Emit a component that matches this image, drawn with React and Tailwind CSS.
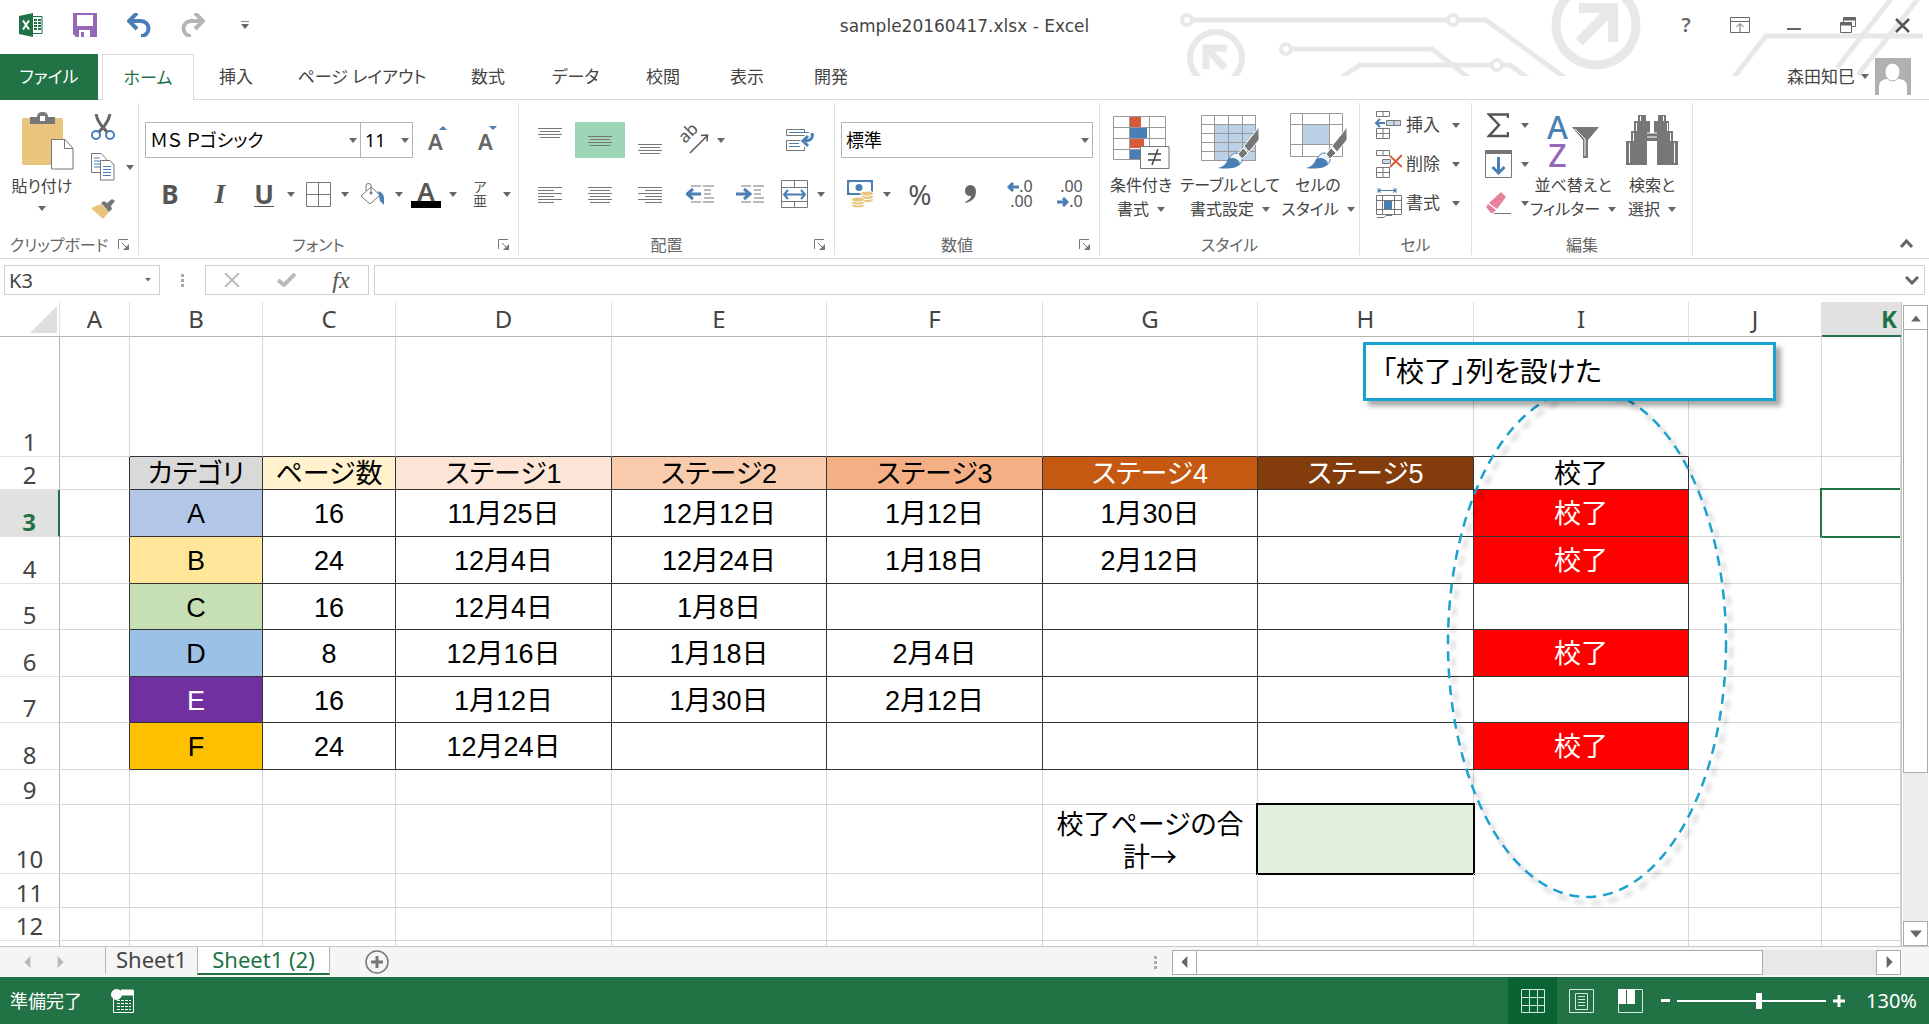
import { clsx } from "clsx";

const TABS = [
  { label: "挿入" },
  { label: "ページ レイアウト", width: "w-[168px]" },
  { label: "数式" },
  { label: "データ", width: "w-[91px]" },
  { label: "校閲" },
  { label: "表示" },
  { label: "開発" },
];

const COLUMNS = [
  { name: "A", width: "w-[70px]" },
  { name: "B", width: "w-[133px]" },
  { name: "C", width: "w-[133px]" },
  { name: "D", width: "w-[216px]" },
  { name: "E", width: "w-[215px]" },
  { name: "F", width: "w-[216px]" },
  { name: "G", width: "w-[215px]" },
  { name: "H", width: "w-[216px]" },
  { name: "I", width: "w-[215px]" },
  { name: "J", width: "w-[133px]" },
  { name: "K", width: "" },
];

const DONE = "校了";

const ROWS = [
  { n: 1, height: "h-[120px]", cells: {} },
  {
    n: 2,
    height: "h-[33px]",
    cells: {
      B: "カテゴリ",
      C: "ページ数",
      D: "ステージ1",
      E: "ステージ2",
      F: "ステージ3",
      G: "ステージ4",
      H: "ステージ5",
      I: DONE,
    },
  },
  { n: 3, height: "h-[47px]", cells: { B: "A", C: "16", D: "11月25日", E: "12月12日", F: "1月12日", G: "1月30日", I: DONE } },
  { n: 4, height: "h-[47px]", cells: { B: "B", C: "24", D: "12月4日", E: "12月24日", F: "1月18日", G: "2月12日", I: DONE } },
  { n: 5, height: "h-[46px]", cells: { B: "C", C: "16", D: "12月4日", E: "1月8日" } },
  { n: 6, height: "h-[47px]", cells: { B: "D", C: "8", D: "12月16日", E: "1月18日", F: "2月4日", I: DONE } },
  { n: 7, height: "h-[46px]", cells: { B: "E", C: "16", D: "1月12日", E: "1月30日", F: "2月12日" } },
  { n: 8, height: "h-[47px]", cells: { B: "F", C: "24", D: "12月24日", I: DONE } },
  { n: 9, height: "h-[35px]", cells: {} },
  { n: 10, height: "h-[69px]", cells: { G: "校了ページの合計→" } },
  { n: 11, height: "h-[34px]", cells: {} },
  { n: 12, height: "h-[33px]", cells: {} },
  { n: "", height: "h-[33px]", cells: {} },
];

const FILLS = {
  B2: "bg-[#d9d9d9]",
  C2: "bg-[#fff2cc]",
  D2: "bg-[#fce4d6]",
  E2: "bg-[#f8cbad]",
  F2: "bg-[#f4b084]",
  G2: "bg-[#c65911] text-white",
  H2: "bg-[#833c0c] text-white",
  B3: "bg-[#b4c6e7]",
  B4: "bg-[#ffe699]",
  B5: "bg-[#c6e0b4]",
  B6: "bg-[#9bc2e6]",
  B7: "bg-[#7030a0] text-white",
  B8: "bg-[#ffc000]",
  H10: "bg-[#e2efda]",
};

function Caret({ className = "" }) {
  return (
    <svg viewBox="0 0 8 5" className={clsx("h-[5px] w-2 shrink-0", className)} fill="#666">
      <path d="M0 0h8L4 5z" />
    </svg>
  );
}

function Split({ label, children }) {
  return (
    <div className="flex h-9 w-[54px] items-center">
      <button type="button" aria-label={label} className="flex h-9 w-[38px] items-center justify-center">
        {children}
      </button>
      <button type="button" aria-label={`${label} オプション`} className="flex h-9 w-4 items-center justify-center">
        <Caret />
      </button>
    </div>
  );
}

function Tool({ label, active, children }) {
  return (
    <button
      type="button"
      aria-label={label}
      className={clsx("flex h-9 w-[50px] items-center justify-center", active && "bg-[#9fd5b7]")}
    >
      {children}
    </button>
  );
}

function Group({ label, width, launcher, children }) {
  return (
    <section className={clsx("my-[3px] flex shrink-0 flex-col border-r border-[#e1e1e1]", width)}>
      <div className="h-[132px]">{children}</div>
      <div className="flex h-5 items-center text-[#666]">
        <span className="flex-1 whitespace-nowrap text-center leading-5">{label}</span>
        {launcher && (
          <button type="button" aria-label={`${label}の設定`} className="mr-2 w-3">
            <svg viewBox="0 0 12 12" className="h-3 w-3" fill="none" stroke="#777">
              <path d="M.5 10V.5H10M4 4l6 6" />
              <path d="M11 5v6H5z" fill="#777" stroke="none" />
            </svg>
          </button>
        )}
      </div>
    </section>
  );
}

function BigButton({ lines, width, icon }) {
  return (
    <button type="button" className={clsx("flex h-[124px] shrink-0 flex-col items-center", width)}>
      <span className="flex h-[62px] items-end justify-center">{icon}</span>
      <span className="mt-1 whitespace-nowrap leading-6">{lines[0]}</span>
      <span className="flex items-center gap-2 whitespace-nowrap leading-6">
        {lines[1]}
        <Caret />
      </span>
    </button>
  );
}

/* rows holds the start and end x of each ruled line */
function LinesIcon({ rows }) {
  const height = 3 * (rows.length - 1) + 2;
  return (
    <svg viewBox={`0 0 24 ${height}`} width="24" height={height} stroke="#777" shapeRendering="crispEdges">
      {rows.map(([a, b], i) => (
        <path key={i} d={`M${a} ${i * 3 + 1}H${b}`} />
      ))}
    </svg>
  );
}

const VALIGN_ROWS = [[0, 24], [2, 22], [0, 24], [2, 22]];
const LEFT_ROWS = [[0, 24], [0, 16], [0, 24], [0, 16], [0, 24], [0, 16]];
const CENTER_ROWS = [[0, 24], [2, 22], [0, 24], [2, 22], [0, 24], [2, 22]];
const RIGHT_ROWS = [[0, 24], [7, 24], [0, 24], [7, 24], [0, 24], [7, 24]];

function ExcelIcon() {
  return (
    <svg viewBox="0 0 24 24" className="h-6 w-6">
      <path d="M13 3.500h10v17H13z" fill="#fff" stroke="#217346" />
      <path
        d="M15 6h3v2h-3zM19 6h3v2h-3zM15 9h3v2h-3zM19 9h3v2h-3zM15 12h3v2h-3zM19 12h3v2h-3zM15 15h3v2h-3zM19 15h3v2h-3z"
        fill="#217346"
      />
      <path d="M0 3l14-3v24L0 21z" fill="#217346" />
      <path d="M4 7.500l6 9M10 7.500l-6 9" stroke="#fff" strokeWidth="2" />
    </svg>
  );
}

function SaveIcon() {
  return (
    <svg viewBox="0 0 24 24" className="h-6 w-6">
      <path d="M0 0h24v24H3l-3-3z" fill="#9668b8" />
      <path d="M4 2h16v11H4zM6 17h11v7H6z" fill="#fff" />
      <path d="M8 19h3v5H8z" fill="#9668b8" />
    </svg>
  );
}

function UndoIcon({ color, flip }) {
  return (
    <svg viewBox="0 0 24 24" className={clsx("h-6 w-6", flip && "-scale-x-100")} fill="none" stroke={color}>
      <path d="M3 8h11a7.500 7.500 0 0 1 0 15" strokeWidth="4" />
      <path d="M10 0L2 8l8 8" strokeWidth="4" />
    </svg>
  );
}

function PasteIcon() {
  return (
    <svg viewBox="0 0 52 58" className="h-[58px] w-[52px]">
      <rect y="6" width="41" height="47" rx="2" fill="#e9c47c" />
      <path d="M8 12V5h7q0-5 5.500-5T26 5h7v7z" fill="#777" />
      <rect x="18" y="4" width="5" height="5" fill="#fff" />
      <path d="M29.500 27.500H43l8 9V57H29.500z" fill="#fff" stroke="#777" />
      <path d="M42.500 28v8.500H51" fill="none" stroke="#777" />
    </svg>
  );
}

function CutIcon() {
  return (
    <svg viewBox="0 0 24 26" className="h-[26px] w-6" fill="none">
      <path d="M5 0q1 6 5 11l6 7M19 0q-1 6-5 11l-6 7" stroke="#666" strokeWidth="3" />
      <circle cx="5" cy="21" r="4" stroke="#4a7fb5" strokeWidth="2" />
      <circle cx="19" cy="21" r="4" stroke="#4a7fb5" strokeWidth="2" />
    </svg>
  );
}

function CopyIcon() {
  return (
    <svg viewBox="0 0 24 28" className="h-7 w-6">
      <path d="M.5.5H10l5 5v14H.5z" fill="#fff" stroke="#777" />
      <path d="M3 5h6M3 8h6M3 11h6M3 14h6" stroke="#4a7fb5" />
      <path d="M9.500 7.500H19l4 4.500v15H9.500z" fill="#fff" stroke="#777" />
      <path d="M12 13.500h8M12 16.500h8M12 19.500h8M12 22.500h8" stroke="#4a7fb5" />
    </svg>
  );
}

function BrushIcon() {
  return (
    <svg viewBox="0 0 24 20" className="h-5 w-6">
      <path d="M0 9l10-4 8 8-6 7z" fill="#e9c47c" />
      <path d="M10 4l3-2 3 2 5-4 3 2-4 5 1 3-3 3z" fill="#777" />
    </svg>
  );
}

function BordersIcon() {
  return (
    <svg viewBox="0 0 25 25" className="h-[25px] w-[25px]" fill="none" stroke="#777">
      <path d="M.5.5h24v24H.5zM12.500 0v25M0 12.500h25" />
    </svg>
  );
}

function BucketIcon() {
  return (
    <svg viewBox="0 0 24 22" className="h-[22px] w-6" fill="none">
      <path d="M11 4l9 8-10 9-9-8z" stroke="#777" />
      <path d="M6 8V3q0-3 3-2.500t2 3V11" stroke="#777" />
      <circle cx="11" cy="10" r="1.500" fill="#777" />
      <path d="M18 8q6 2 6 7v7l-4-4z" fill="#4a7fb5" />
    </svg>
  );
}

function FontSizeIcon({ grow }) {
  return (
    <svg viewBox="0 0 24 32" className="h-8 w-6" fill="#666">
      <text x="2" y="26" fontSize="22" fontWeight="600">
        A
      </text>
      <path d={grow ? "M13 6h8l-4-4z" : "M13 2h8l-4 4z"} fill="#4a7fb5" />
    </svg>
  );
}

function OrientationIcon() {
  return (
    <svg viewBox="0 0 32 32" className="h-8 w-8" fill="none" stroke="#555">
      <text x="7" y="20" transform="rotate(-45 7 20)" fontSize="17" fill="#555" stroke="none">
        ab
      </text>
      <path d="M12 29L29 12M23 11.500l6.500-.5-.5 6.500" strokeWidth="1.500" />
    </svg>
  );
}

function WrapIcon() {
  return (
    <svg viewBox="0 0 28 24" className="h-6 w-7" fill="none">
      <path d="M18.500 4V1.500H.5v6h18M18.500 19v3.500H.5v-10h14" stroke="#777" />
      <path d="M3 4.500h20M3 15.500h10M3 18.500h11" stroke="#4a7fb5" />
      <path d="M26 5q2 8-8 8M22 8l-5 5 5 5" stroke="#4a7fb5" strokeWidth="3" />
    </svg>
  );
}

function IndentIcon({ flip }) {
  return (
    <svg viewBox="0 0 28 18" className="h-[18px] w-7" fill="none">
      <path d="M5 1h10M17 1h11M18 5h7M18 9h7M18 13h10M5 17h10M17 17h11" stroke="#777" />
      <path
        d={flip ? "M0 9h13M8 4l6 5-6 5" : "M2 9h13M7 4L1 9l6 5"}
        stroke="#4a7fb5"
        strokeWidth="3"
      />
    </svg>
  );
}

function MergeIcon() {
  return (
    <svg viewBox="0 0 27 28" className="h-7 w-[27px]" fill="none">
      <path d="M.5.5h26v27H.5zM0 7.500h27M0 21.500h27M13.500 0v7M13.500 22v6" stroke="#777" />
      <path d="M3 14.500h21M7 10l-4 4.500L7 19M20 10l4 4.500-4 4.500" stroke="#4a7fb5" strokeWidth="2" />
    </svg>
  );
}

function MoneyIcon() {
  return (
    <svg viewBox="0 0 27 28" className="h-7 w-[27px]">
      <rect x="1" y="1" width="24" height="13" fill="#fff" stroke="#4a7fb5" strokeWidth="2" />
      <path d="M0 0h5L0 5zM26 0h-5l5 5zM0 15v-5l5 5z" fill="#4a7fb5" />
      <circle cx="12" cy="7.500" r="3.500" fill="#4a7fb5" />
      <g fill="#e9c47c" stroke="#fff">
        <ellipse cx="20" cy="20" rx="6.500" ry="2.500" />
        <ellipse cx="20" cy="17" rx="6.500" ry="2.500" />
        <ellipse cx="20" cy="13.500" rx="6.500" ry="2.500" />
        <ellipse cx="11" cy="25.500" rx="6.500" ry="2.500" />
        <ellipse cx="11" cy="22.500" rx="6.500" ry="2.500" />
        <ellipse cx="11" cy="19.500" rx="6.500" ry="2.500" />
      </g>
    </svg>
  );
}

function DecimalArrow({ dir }) {
  return (
    <svg viewBox="0 0 12 10" className="h-[10px] w-3" fill="none" stroke="#4a7fb5" strokeWidth="3">
      <path d={dir === "left" ? "M12 5H2M6 1L2 5l4 4" : "M0 5h10M6 1l4 4-4 4"} />
    </svg>
  );
}

function DecimalIcon({ increase }) {
  return (
    <span className="flex flex-col text-base leading-[15px] text-[#555]">
      <span className="flex items-center justify-end">
        {increase && <DecimalArrow dir="left" />}
        {increase ? ".0" : ".00"}
      </span>
      <span className="flex items-center justify-end">
        {!increase && <DecimalArrow dir="right" />}
        {increase ? ".00" : ".0"}
      </span>
    </span>
  );
}

function ConditionalIcon() {
  return (
    <svg viewBox="0 0 57 53" className="h-[53px] w-[57px]">
      <path d="M17 1h11v10H17zM17 23h14v9H17z" fill="#d65a3c" />
      <path d="M17 12h17v10H17zM17 34h11v9H17z" fill="#4a7fb5" />
      <path d="M.5.5h52v43H.5zM0 11.500h52M0 22.500h52M0 33.500h52M16.500 0v43M36.500 0v43" fill="none" stroke="#999" />
      <path d="M27.500 30.500H56v22H27.500z" fill="#fff" stroke="#777" />
      <path d="M35 38h13M35 44h13M45 33l-6 16" stroke="#444" strokeWidth="1.500" />
    </svg>
  );
}

function PaintBrush({ x, y }) {
  return (
    <g transform={`translate(${x} ${y})`}>
      <path d="M12 30q4-6 10-3 5 6-1 11-6 3-11-2z" fill="#eef4fb" stroke="#4a7fb5" />
      <path d="M0 41q8-2 10-9 8-3 12 4-3 5-8 5-8 1-14 0z" fill="#4a7fb5" />
      <path d="M20 27l5-6 5 5-6 6z" fill="#777" stroke="#fff" />
      <path d="M26 19L41 0v13L31 25z" fill="#777" stroke="#fff" />
    </g>
  );
}

function TableStyleIcon() {
  return (
    <svg viewBox="0 0 58 54" className="h-[54px] w-[58px]">
      <path d="M14 9h41v36H14z" fill="#bcd0e6" />
      <path
        d="M.5.5h54v45H.5zM0 9.500h54M0 18.500h54M0 27.500h54M0 36.500h54M13.500 0v45M27.500 0v45M41.500 0v45"
        fill="none"
        stroke="#999"
      />
      <PaintBrush x={17} y={12} />
    </svg>
  );
}

function CellStyleIcon() {
  return (
    <svg viewBox="0 0 57 56" className="h-14 w-[57px]">
      <path d="M13 12h26v19H13z" fill="#bcd0e6" />
      <path d="M.5.5h52v43H.5zM0 11.500h52M0 31.500h52M12.500 0v44M39.500 0v44" fill="none" stroke="#999" />
      <PaintBrush x={16} y={14} />
    </svg>
  );
}

function InsertCellsIcon() {
  return (
    <svg viewBox="0 0 28 28" className="h-7 w-7" fill="none" stroke="#777">
      <path d="M2.500.5h13v5h-13zM9 .5v5M2.500 17.500h13v10h-13zM9 17.500v10M2.500 22.500h13" />
      <path d="M12.500 9.500h14v5h-14zM20 9.500v5" fill="#c9d7e8" />
      <path d="M11 12H2M6 8l-4 4 4 4" stroke="#4a7fb5" strokeWidth="2" />
    </svg>
  );
}

function DeleteCellsIcon() {
  return (
    <svg viewBox="0 0 28 28" className="h-7 w-7" fill="none" stroke="#777">
      <path d="M2.500.5h13v5h-13zM9 .5v5M2.500 17.500h13v10h-13zM9 17.500v10M2.500 22.500h13" />
      <path d="M8.500 9.500h8v4h-8z" fill="#c9d7e8" />
      <path d="M16 6l12 11M28 5L16 17" stroke="#d65a3c" strokeWidth="2" />
    </svg>
  );
}

function FormatCellsIcon() {
  return (
    <svg viewBox="0 0 28 30" className="h-[30px] w-7" fill="none" stroke="#777">
      <path d="M4 2.500h18M4 0v5M22 0v5M7 .5l-3 2 3 2M19 .5l3 2-3 2" stroke="#4a7fb5" />
      <path d="M2.500 7.500h25v19h-25zM8.500 7v20M20.500 7v20M2 12.500h25M2 21.500h25M3 29.500h7l2-2h6" />
      <path d="M10 13h8v8h-8z" fill="#4a7fb5" stroke="none" />
    </svg>
  );
}

function SortFilterIcon() {
  return (
    <span className="flex h-14 items-start gap-1">
      <span className="flex w-5 flex-col items-center text-[32px] font-medium leading-[28px]">
        <span className="text-[#4a7fb5]">A</span>
        <span className="text-[#9668b8]">Z</span>
      </span>
      <svg viewBox="0 0 27 31" className="mt-[14px] h-[31px] w-[27px]">
        <path d="M0 0h27L16 13v18h-5V13z" fill="#777" />
        <path d="M3 2l10 10v17" fill="none" stroke="#fff" />
      </svg>
    </span>
  );
}

function BinocularsIcon() {
  return (
    <svg viewBox="0 0 52 56" className="h-14 w-[52px]">
      <path
        d="M12 2h8v6h4v12h4V8h4V2h8v6h3v10h4v10h5v24H31V28H21v24H0V28h5V18h3V8h4z"
        fill="#777"
      />
      <path
        d="M14.500 3v5M10.500 10v8M7.500 20v8M3.500 30v20M37.500 3v5M41.500 10v8M44.500 20v8M48.500 30v20M21 20h10M21 24h10"
        stroke="#fff"
        fill="none"
      />
    </svg>
  );
}

function TitleArt() {
  return (
    <svg
      viewBox="1180 0 749 76"
      className="pointer-events-none absolute right-0 top-0 h-[76px] w-[749px]"
      fill="none"
      stroke="#e8e8e8"
      strokeWidth="5"
    >
      <circle cx="1187" cy="20" r="5" strokeWidth="4" />
      <circle cx="1453" cy="20" r="5" strokeWidth="4" />
      <path d="M1192 20h256M1458 20h28l79 58" />
      <circle cx="1286" cy="49" r="5" strokeWidth="4" />
      <path d="M1291 49h141l37 29" />
      <circle cx="1497" cy="65" r="5" strokeWidth="4" />
      <path d="M1342 77l18-12h132M1502 65h8l18 13" />
      <circle cx="1216" cy="58" r="26" strokeWidth="6" />
      <path d="M1206 69V48h21M1206 48l19 20" strokeWidth="7" />
      <circle cx="1596" cy="25" r="40" strokeWidth="9" />
      <path d="M1579 8h34v34M1613 8l-34 34" strokeWidth="10" />
      <path d="M1734 77l32-41h157M1891-1l-54 69M1918-1l-60 76" />
    </svg>
  );
}

function TitleBar() {
  const control = "flex h-8 w-[54px] items-center justify-center";
  return (
    <header className="relative grid h-[54px] grid-cols-[1fr_auto_1fr] items-center">
      <TitleArt />
      <div className="relative flex items-center gap-[30px] pb-1 pl-[19px]">
        <ExcelIcon />
        <button type="button" aria-label="上書き保存">
          <SaveIcon />
        </button>
        <button type="button" aria-label="元に戻す">
          <UndoIcon color="#4a7fb5" />
        </button>
        <button type="button" aria-label="やり直し">
          <UndoIcon color="#b5b5b5" flip />
        </button>
        <button type="button" aria-label="クイック アクセスのカスタマイズ" className="flex w-5 flex-col items-center gap-[2px]">
          <span className="h-px w-2 bg-[#888]" />
          <Caret />
        </button>
      </div>
      <h1 className="relative font-['DejaVu_Sans',sans-serif] text-[17px] text-[#444]">sample20160417.xlsx - Excel</h1>
      <div className="relative flex justify-end pb-1">
        <button type="button" aria-label="ヘルプ" className={clsx(control, "text-xl font-semibold text-[#666]")}>
          ?
        </button>
        <button type="button" aria-label="リボンの表示オプション" className={control}>
          <svg viewBox="0 0 20 16" className="h-4 w-5" fill="none" stroke="#666">
            <path d="M.5.5h19v15H.5zM0 4.500h20M10 15V7M6.500 10L10 6.500l3.500 3.500" />
          </svg>
        </button>
        <button type="button" aria-label="最小化" className={clsx(control, "pt-2")}>
          <span className="h-[2px] w-[14px] bg-[#666]" />
        </button>
        <button type="button" aria-label="元のサイズに戻す" className={control}>
          <svg viewBox="0 0 16 16" className="h-4 w-4" fill="none" stroke="#666">
            <path d="M3.500 5V.5h12v9H12M.5 5.500h11v10H.5z" />
            <path d="M3 2h13M0 7h12" strokeWidth="3" />
          </svg>
        </button>
        <button type="button" aria-label="閉じる" className={control}>
          <svg viewBox="0 0 15 15" className="h-[15px] w-[15px]" stroke="#555" strokeWidth="2.500">
            <path d="M1 1l13 13M14 1L1 14" />
          </svg>
        </button>
      </div>
    </header>
  );
}

function TabBar() {
  return (
    <nav className="relative flex h-[46px] text-[17px] text-[#444]">
      <button type="button" className="w-[98px] bg-[#217346] text-white">
        ファイル
      </button>
      <span className="w-1 border-b border-[#d9d9d9]" />
      <button type="button" className="w-[92px] border border-b-0 border-[#d9d9d9] bg-white text-[#217346]">
        ホーム
      </button>
      {TABS.map((tab) => (
        <button key={tab.label} type="button" className={clsx("whitespace-nowrap border-b border-[#d9d9d9]", tab.width ?? "w-[84px]")}>
          {tab.label}
        </button>
      ))}
      <div className="flex flex-1 items-center justify-end border-b border-[#d9d9d9] pr-[18px]">
        <button type="button" className="flex items-center gap-[6px]">
          森田知巳
          <Caret />
        </button>
        <svg viewBox="0 0 36 37" className="ml-[6px] h-[37px] w-9">
          <path d="M0 0h36v37H0z" fill="#b0b0b0" />
          <path d="M4 37V28q0-6 8-7h12q8 1 8 7v9z" fill="#fff" />
          <ellipse cx="17.500" cy="14" rx="7.500" ry="9" fill="#fff" stroke="#b0b0b0" />
        </svg>
      </div>
    </nav>
  );
}

function CellCommand({ icon, label }) {
  return (
    <button type="button" className="flex h-9 items-center">
      {icon}
      <span className="ml-1 w-[42px] text-left text-[17px]">{label}</span>
      <Caret className="ml-1" />
    </button>
  );
}

function Ribbon() {
  const rows = "flex flex-col gap-[18px] pl-[6px] pt-[19px]";
  const select = "h-9 w-full appearance-none border border-[#b5b5b5] bg-white pl-1 text-lg text-black";
  const selectCaret = "pointer-events-none absolute right-1 top-4";

  return (
    <div className="relative flex h-[159px] border-b border-[#d9d9d9] text-base text-[#444]">
      <Group label="クリップボード" width="w-[139px]" launcher>
        <div className="flex">
          <button type="button" className="flex w-[84px] flex-col items-center">
            <span className="pl-3 pt-[9px]">
              <PasteIcon />
            </span>
            <span className="pt-1">貼り付け</span>
            <Caret className="mt-2" />
          </button>
          <div className="flex flex-col pt-[6px]">
            <div className="pl-[7px]">
              <button type="button" aria-label="切り取り" className="flex h-9 w-6 items-center">
                <CutIcon />
              </button>
            </div>
            <div className="my-1">
              <Split label="コピー">
                <CopyIcon />
              </Split>
            </div>
            <div className="pl-[7px]">
              <button type="button" aria-label="書式のコピー/貼り付け" className="flex h-10 w-6 items-center">
                <BrushIcon />
              </button>
            </div>
          </div>
        </div>
      </Group>

      <Group label="フォント" width="w-[380px]" launcher>
        <div className={rows}>
          <div className="flex h-9 items-center">
            <div className="relative w-[216px]">
              <select aria-label="フォント名" className={select}>
                <option>ＭＳ Ｐゴシック</option>
              </select>
              <Caret className={selectCaret} />
            </div>
            <div className="relative w-[52px]">
              <select aria-label="フォント サイズ" className={clsx(select, "border-l-0")}>
                <option>11</option>
              </select>
              <Caret className={selectCaret} />
            </div>
            <Tool label="フォント サイズの拡大">
              <FontSizeIcon grow />
            </Tool>
            <Tool label="フォント サイズの縮小">
              <FontSizeIcon />
            </Tool>
          </div>
          <div className="flex h-9 items-center text-[#555]">
            <Tool label="太字">
              <span className="text-[26px] font-bold">B</span>
            </Tool>
            <Tool label="斜体">
              <span className="font-['Liberation_Serif',serif] text-[28px] font-bold italic">I</span>
            </Tool>
            <Split label="下線">
              <span className="border-b border-[#555] text-[26px] font-bold leading-6">U</span>
            </Split>
            <Split label="罫線">
              <BordersIcon />
            </Split>
            <Split label="塗りつぶしの色">
              <BucketIcon />
            </Split>
            <Split label="フォントの色">
              <span className="border-b-[7px] border-black px-[6px] text-[26px] font-semibold leading-5">A</span>
            </Split>
            <Split label="ふりがな">
              <span className="flex flex-col items-center text-sm leading-[14px]">
                <span>ア</span>
                <span>亜</span>
              </span>
            </Split>
          </div>
        </div>
      </Group>

      <Group label="配置" width="w-[316px]" launcher>
        <div className={rows}>
          <div className="flex h-9 items-center">
            <Tool label="上揃え">
              <span className="pb-4">
                <LinesIcon rows={VALIGN_ROWS} />
              </span>
            </Tool>
            <Tool label="上下中央揃え" active>
              <LinesIcon rows={VALIGN_ROWS} />
            </Tool>
            <Tool label="下揃え">
              <span className="pt-4">
                <LinesIcon rows={VALIGN_ROWS} />
              </span>
            </Tool>
            <Split label="方向">
              <OrientationIcon />
            </Split>
            <span className="w-[46px]" />
            <Tool label="折り返して全体を表示する">
              <WrapIcon />
            </Tool>
          </div>
          <div className="flex h-9 items-center">
            <Tool label="左揃え">
              <LinesIcon rows={LEFT_ROWS} />
            </Tool>
            <Tool label="中央揃え">
              <LinesIcon rows={CENTER_ROWS} />
            </Tool>
            <Tool label="右揃え">
              <LinesIcon rows={RIGHT_ROWS} />
            </Tool>
            <Tool label="インデントを減らす">
              <IndentIcon />
            </Tool>
            <Tool label="インデントを増やす">
              <IndentIcon flip />
            </Tool>
            <Split label="セルを結合して中央揃え">
              <MergeIcon />
            </Split>
          </div>
        </div>
      </Group>

      <Group label="数値" width="w-[265px]" launcher>
        <div className={rows}>
          <div className="relative w-[252px]">
            <select aria-label="表示形式" className={select}>
              <option>標準</option>
            </select>
            <Caret className={selectCaret} />
          </div>
          <div className="flex h-9 items-center">
            <Split label="通貨表示形式">
              <MoneyIcon />
            </Split>
            <Tool label="パーセント スタイル">
              <span className="text-[28px] text-[#555]">%</span>
            </Tool>
            <Tool label="桁区切りスタイル">
              <svg viewBox="0 0 12 18" className="h-[18px] w-3" fill="#666">
                <path d="M6 0q6 0 6 7 0 8-10 11l-1-1q6-3 6-6-6 0-6-5t5-6z" />
              </svg>
            </Tool>
            <Tool label="小数点以下の表示桁数を増やす">
              <DecimalIcon increase />
            </Tool>
            <Tool label="小数点以下の表示桁数を減らす">
              <DecimalIcon />
            </Tool>
          </div>
        </div>
      </Group>

      <Group label="スタイル" width="w-[260px]">
        <div className="flex pt-1">
          <BigButton width="w-[82px]" lines={["条件付き", "書式"]} icon={<ConditionalIcon />} />
          <BigButton width="w-[96px]" lines={["テーブルとして", "書式設定"]} icon={<TableStyleIcon />} />
          <BigButton width="w-[80px]" lines={["セルの", "スタイル"]} icon={<CellStyleIcon />} />
        </div>
      </Group>

      <Group label="セル" width="w-[112px]">
        <div className="flex flex-col gap-[3px] pl-[14px] pt-1">
          <CellCommand icon={<InsertCellsIcon />} label="挿入" />
          <CellCommand icon={<DeleteCellsIcon />} label="削除" />
          <CellCommand icon={<FormatCellsIcon />} label="書式" />
        </div>
      </Group>

      <Group label="編集" width="w-[221px]">
        <div className="flex pl-[7px] pt-1">
          <div className="flex w-[50px] shrink-0 flex-col gap-[3px]">
            <Split label="オート SUM">
              <svg viewBox="0 0 22 25" className="h-[25px] w-[22px]" fill="none" stroke="#555">
                <path d="M21 5V1.500H2L12 12 2 23h19v-4" strokeWidth="2.500" />
              </svg>
            </Split>
            <Split label="フィル">
              <svg viewBox="0 0 27 28" className="h-7 w-[27px]" fill="none">
                <path d="M.5.5h26v27H.5z" stroke="#777" />
                <path d="M0 0h27v4H0z" fill="#777" />
                <path d="M13.500 7v17M7.500 17l6 6 6-6" stroke="#4a7fb5" strokeWidth="3" />
              </svg>
            </Split>
            <Split label="クリア">
              <svg viewBox="0 0 26 22" className="h-[22px] w-[26px]">
                <path d="M16 0l5 5-9 12-8-6z" fill="#e8829a" />
                <path d="M3 12l8 6-3 3H6l-5-6z" fill="#e8829a" />
                <path d="M9 21.500h17" stroke="#777" />
              </svg>
            </Split>
          </div>
          <BigButton width="w-[88px]" lines={["並べ替えと", "フィルター"]} icon={<SortFilterIcon />} />
          <BigButton width="w-[70px]" lines={["検索と", "選択"]} icon={<BinocularsIcon />} />
        </div>
      </Group>

      <div className="flex flex-1 items-end justify-end pb-[10px] pr-4">
        <button type="button" aria-label="リボンを折りたたむ">
          <svg viewBox="0 0 13 9" className="h-[9px] w-[13px]" fill="none" stroke="#666" strokeWidth="3">
            <path d="M1 8l5.500-6L12 8" />
          </svg>
        </button>
      </div>
    </div>
  );
}

function Grip() {
  return (
    <span className="flex flex-col items-center gap-[2px]">
      <span className="h-[3px] w-[3px] bg-[#aaa]" />
      <span className="h-[3px] w-[3px] bg-[#aaa]" />
      <span className="h-[3px] w-[3px] bg-[#aaa]" />
    </span>
  );
}

function FormulaBar() {
  return (
    <div className="flex h-[43px] items-center px-1 pb-px text-[#444]">
      <div className="relative w-[156px]">
        <input aria-label="名前ボックス" defaultValue="K3" className="h-[30px] w-full border border-[#d0d0d0] pl-1 text-xl" />
        <Caret className="absolute right-2 top-3 scale-75" />
      </div>
      <span className="w-[45px]">
        <Grip />
      </span>
      <div className="mr-[5px] flex h-[30px] w-[164px] items-center justify-around border border-[#d0d0d0]">
        <button type="button" aria-label="キャンセル">
          <svg viewBox="0 0 16 14" className="h-[14px] w-4" stroke="#bbb" strokeWidth="2">
            <path d="M1 0l14 14M15 0L1 14" />
          </svg>
        </button>
        <button type="button" aria-label="入力">
          <svg viewBox="0 0 19 14" className="h-[14px] w-[19px]" fill="none" stroke="#bbb" strokeWidth="4">
            <path d="M1 7l6 5L18 1" />
          </svg>
        </button>
        <button type="button" className="font-['Liberation_Serif',serif] text-2xl italic leading-6 text-[#555]">
          fx
        </button>
      </div>
      <div className="relative flex-1">
        <input aria-label="数式バー" className="h-[30px] w-full border border-[#d0d0d0]" />
        <svg viewBox="0 0 14 9" className="absolute right-[6px] top-[11px] h-[9px] w-[14px]" fill="none" stroke="#666" strokeWidth="3">
          <path d="M1 1l6 6 6-6" />
        </svg>
      </div>
    </div>
  );
}

function cellBorder(col, n) {
  const inTable = col >= "B" && col <= "I" && n >= 2 && n <= 8;
  const right = inTable || (col === "A" && n >= 2 && n <= 8);
  const bottom = inTable || (n === 1 && col >= "B" && col <= "I");
  return clsx(
    "border-b border-r",
    right ? "border-r-[#333]" : "border-r-[#d6d6d6]",
    bottom ? "border-b-[#333]" : "border-b-[#d6d6d6]"
  );
}

function Cell({ col, row }) {
  const value = row.cells[col];
  const id = `${col}${row.n}`;
  const done = col === "I" && row.n > 2 && value;

  return (
    <td
      className={clsx(
        "relative p-0 text-center align-middle",
        cellBorder(col, row.n),
        FILLS[id],
        done && "bg-[#ff0000] text-white",
        id === "G10" ? "px-2 font-['Noto_Sans_CJK_JP',sans-serif] leading-[33px]" : "pt-[2px]"
      )}
    >
      {value}
      {id === "K3" && <span className="absolute -bottom-[2px] -left-[2px] -top-[2px] right-0 border-2 border-r-0 border-[#217346]" />}
      {id === "H10" && <span className="absolute -bottom-[2px] -left-[2px] -right-[2px] -top-[2px] border-2 border-black" />}
    </td>
  );
}

function Sheet() {
  return (
    <div className="relative min-w-0 flex-1 overflow-hidden border-r border-[#c6c6c6]">
      <table className="w-full table-fixed border-separate border-spacing-0 font-['Liberation_Sans','Noto_Sans_CJK_JP',sans-serif] text-[27px] leading-[30px] text-black">
        <thead>
          <tr className="h-[35px] font-['Noto_Sans',sans-serif] text-2xl leading-8 text-[#444]">
            <th className="w-[60px] border-b border-r border-[#b5b5b5] border-r-[#e1e1e1] p-0">
              <svg viewBox="0 0 27 27" className="ml-auto mr-[2px] h-[27px] w-[27px]" fill="#dfdfdf">
                <path d="M27 0v27H0z" />
              </svg>
            </th>
            {COLUMNS.map((c) => (
              <th
                key={c.name}
                scope="col"
                className={clsx(
                  "p-0",
                  c.width,
                  c.name === "K"
                    ? "border-b-2 border-[#217346] bg-[#e1e1e1] pr-1 text-right font-bold text-[#217346]"
                    : "border-b border-r border-[#b5b5b5] border-r-[#e1e1e1] font-normal"
                )}
              >
                {c.name}
              </th>
            ))}
          </tr>
        </thead>
        <tbody>
          {ROWS.map((row) => (
            <tr key={row.n} className={row.height}>
              <th
                scope="row"
                className={clsx(
                  "border-b border-b-[#e1e1e1] p-0 align-bottom font-['Noto_Sans',sans-serif] text-2xl leading-7",
                  row.n === 3
                    ? "border-r-2 border-r-[#217346] bg-[#e1e1e1] font-bold text-[#217346]"
                    : "border-r border-r-[#b5b5b5] font-normal text-[#444]"
                )}
              >
                {row.n}
              </th>
              {COLUMNS.map((c) => (
                <Cell key={c.name} col={c.name} row={row} />
              ))}
            </tr>
          ))}
        </tbody>
      </table>

      {/* annotation shapes floating above the cells */}
      <svg viewBox="0 0 300 540" className="pointer-events-none absolute left-[1437px] top-[71px] h-[540px] w-[300px]" fill="none">
        <g className="blur-[2px]">
          <ellipse cx="155" cy="276" rx="139" ry="254" stroke="#000" strokeOpacity="0.15" strokeWidth="4" strokeDasharray="10 7" />
        </g>
        <ellipse cx="150" cy="270" rx="139" ry="254" stroke="#1ba1cf" strokeWidth="2.500" strokeDasharray="10 7" />
      </svg>
      <div className="absolute left-[1363px] top-10 flex h-[59px] w-[413px] items-center border-[3px] border-[#1ba1cf] bg-white pb-1 pl-4 font-['Noto_Sans_CJK_JP',sans-serif] text-[28px] text-black shadow-[5px_5px_5px_rgba(0,0,0,0.35)]">
        「校了」列を設けた
      </div>
    </div>
  );
}

function Arrow({ dir, color = "#666" }) {
  const paths = {
    up: "M1 8l4-5 4 5z",
    down: "M0 2h10L5 8z",
    left: "M7 0v10L2 5z",
    right: "M3 0v10l5-5z",
  };
  return (
    <svg viewBox="0 0 10 10" className="h-3 w-3" fill={color}>
      <path d={paths[dir]} />
    </svg>
  );
}

function VerticalScroll() {
  const button = "flex h-[25px] items-center justify-center border border-[#ababab] bg-white";
  return (
    <div className="flex w-[27px] shrink-0 flex-col px-px pt-[3px]">
      <button type="button" aria-label="上へスクロール" className={button}>
        <Arrow dir="up" />
      </button>
      <div className="flex flex-1 flex-col bg-[#ededed]">
        <div className="h-3/4 border border-t-0 border-[#ababab] bg-white" />
      </div>
      <button type="button" aria-label="下へスクロール" className={button}>
        <Arrow dir="down" />
      </button>
    </div>
  );
}

function SheetTabs() {
  const button = "flex w-[25px] items-center justify-center border border-[#ababab] bg-white";
  return (
    <div className="flex h-[31px] items-stretch border-t border-[#c6c6c6] bg-[#f5f5f5] text-[22px] leading-6 text-[#444]">
      <div className="flex w-[105px] items-center gap-5 pl-[22px]">
        <button type="button" aria-label="前のシート">
          <Arrow dir="left" color="#b8b8b8" />
        </button>
        <button type="button" aria-label="次のシート">
          <Arrow dir="right" color="#b8b8b8" />
        </button>
      </div>
      <button type="button" className="mb-[3px] w-[92px] border-l border-[#b5b5b5] pb-[3px]">
        Sheet1
      </button>
      <button
        type="button"
        className="mb-[2px] w-[133px] border-x border-b-2 border-x-[#b5b5b5] border-b-[#217346] bg-white pb-[2px] text-[#217346]"
      >
        Sheet1 (2)
      </button>
      <button type="button" aria-label="新しいシート" className="ml-[35px]">
        <svg viewBox="0 0 24 24" className="h-6 w-6" fill="none" stroke="#777">
          <circle cx="12" cy="12" r="11" strokeWidth="1.500" />
          <path d="M12 6v12M6 12h12" strokeWidth="3" />
        </svg>
      </button>
      <div className="flex flex-1 items-center justify-end gap-[15px] pr-7">
        <Grip />
        <div className="flex h-[25px] w-[729px]">
          <button type="button" aria-label="左へスクロール" className={button}>
            <Arrow dir="left" />
          </button>
          <div className="flex flex-1 bg-[#e8e8e8]">
            <div className="w-5/6 border border-l-0 border-[#ababab] bg-white" />
          </div>
          <button type="button" aria-label="右へスクロール" className={button}>
            <Arrow dir="right" />
          </button>
        </div>
      </div>
    </div>
  );
}

function StatusBar() {
  const view = "flex h-full w-[49px] items-center justify-center";
  return (
    <footer className="flex h-[47px] shrink-0 items-center bg-[#217346] pl-[10px] pr-3 text-lg text-white">
      <span>準備完了</span>
      <button type="button" aria-label="マクロの記録" className="ml-[29px]">
        <svg viewBox="0 0 23 24" className="h-6 w-[23px]" fill="none" stroke="#fff">
          <path d="M2.500 7v16.500h20V1.500H10" />
          <path d="M10 1h12v5H10z" fill="#fff" />
          <circle cx="5.500" cy="5.500" r="5" fill="#fff" />
          <path d="M6 11.500h14M6 14.500h14M6 17.500h14M6 20.500h14" strokeDasharray="3 1" />
        </svg>
      </button>
      <div className="flex h-full flex-1 items-center justify-end">
        <button type="button" aria-label="標準" className={clsx(view, "bg-[#0a6332]")}>
          <svg viewBox="0 0 24 24" className="h-6 w-6" fill="none" stroke="#d5eadc">
            <path d="M.5.5h23v23H.5zM8.500 0v24M16.500 0v24M0 8.500h24M0 16.500h24" />
          </svg>
        </button>
        <button type="button" aria-label="ページ レイアウト" className={view}>
          <svg viewBox="0 0 25 24" className="h-6 w-[25px]" fill="none" stroke="#d5eadc">
            <path d="M.5.5h24v23H.5zM6.500 4.500h12v16h-12zM9 7.500h7M9 10.500h7M9 13.500h7M9 16.500h7" />
          </svg>
        </button>
        <button type="button" aria-label="改ページ プレビュー" className={view}>
          <svg viewBox="0 0 25 24" className="h-6 w-[25px]" fill="none" stroke="#d5eadc">
            <path d="M.5.5h24v23H.5z" />
            <path d="M0 0h8v15H0zM9 0h8v15H9z" fill="#fff" stroke="none" />
          </svg>
        </button>
        <button type="button" aria-label="縮小" className="ml-[6px] mr-[7px] flex h-6 w-[9px] items-center">
          <span className="h-[3px] w-full bg-white" />
        </button>
        <input
          type="range"
          aria-label="ズーム"
          min="0"
          max="100"
          defaultValue="55"
          className="h-6 w-[149px] appearance-none bg-transparent [&::-webkit-slider-runnable-track]:h-[2px] [&::-webkit-slider-runnable-track]:bg-white [&::-webkit-slider-thumb]:-mt-[7px] [&::-webkit-slider-thumb]:h-4 [&::-webkit-slider-thumb]:w-[6px] [&::-webkit-slider-thumb]:appearance-none [&::-webkit-slider-thumb]:bg-white"
        />
        <button type="button" aria-label="拡大" className="ml-[7px]">
          <svg viewBox="0 0 12 12" className="h-3 w-3" stroke="#fff" strokeWidth="3">
            <path d="M6 0v12M0 6h12" />
          </svg>
        </button>
        <span className="w-[72px] text-right text-xl">130%</span>
      </div>
    </footer>
  );
}

export default function App() {
  return (
    <div className="flex h-screen flex-col overflow-hidden bg-white font-['Noto_Sans','Noto_Sans_CJK_JP',sans-serif] [font-feature-settings:'palt']">
      <TitleBar />
      <TabBar />
      <Ribbon />
      <FormulaBar />
      <main className="flex min-h-0 flex-1">
        <Sheet />
        <VerticalScroll />
      </main>
      <SheetTabs />
      <StatusBar />
    </div>
  );
}
